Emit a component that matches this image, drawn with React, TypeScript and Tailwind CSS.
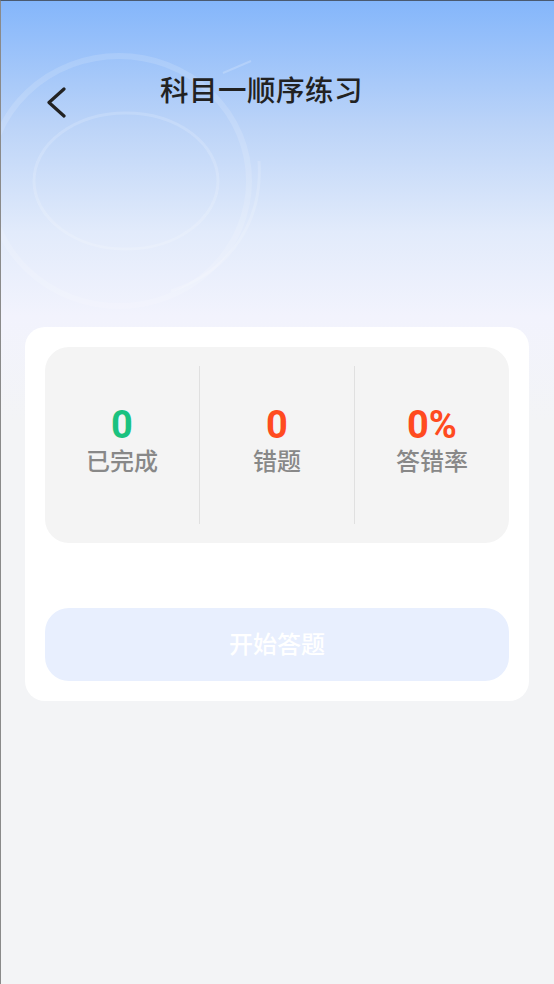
const stats = [
  { value: '0', label: '已完成', color: 'text-[#1bc27f]' },
  { value: '0', label: '错题', color: 'text-[#ff4b1f]' },
  { value: '0%', label: '答错率', color: 'text-[#ff4b1f]' },
];

export default function App() {
  return (
    <div
      className="relative min-h-[984px] w-full overflow-hidden border-l border-t border-l-[#8a8a8a] border-t-[#4a5a70] bg-[#f3f4f6]"
      style={{ fontFamily: 'Roboto, "Noto Sans CJK SC", sans-serif' }}
    >
      {/* header background */}
      <div className="absolute inset-x-0 top-0 h-[420px] bg-[linear-gradient(to_bottom,#84b6fb_0%,#bcd4f8_30%,#e2ebfb_55%,#f2f3fd_75%,#f3f4f6_100%)]" />
      <svg className="absolute left-0 top-0" width="300" height="320" viewBox="0 0 300 320" fill="none">
        <ellipse cx="118" cy="180" rx="130" ry="125" stroke="white" strokeOpacity="0.14" strokeWidth="6" />
        <ellipse cx="125" cy="180" rx="92" ry="68" stroke="white" strokeOpacity="0.16" strokeWidth="3" />
        <path d="M258 160 C 262 220 230 270 170 290" stroke="white" strokeOpacity="0.16" strokeWidth="3" />
        <path d="M222 72 L 250 60" stroke="white" strokeOpacity="0.2" strokeWidth="2" />
      </svg>

      <div className="relative">
        <div className="relative flex h-[182px] items-start justify-center pr-[32px] pt-[72px]">
          <button className="absolute left-[44px] top-[86px] text-[#222]">
            <svg width="24" height="32" viewBox="0 0 24 32" fill="none">
              <path d="M19 2 L4 15.5 L19 29" stroke="currentColor" strokeWidth="3.2" strokeLinecap="round" strokeLinejoin="round" />
            </svg>
          </button>
          <h1 className="text-[28.5px] font-medium leading-[38px] tracking-[0.5px] text-[#222]">科目一顺序练习</h1>
        </div>

        <div className="ml-[24px] mr-[25px] mt-[144px] rounded-[20px] bg-white p-[20px]">
          <div className="flex h-[196px] items-center rounded-[24px] bg-[#f4f4f4] py-[19px]">
            {stats.map((s, i) => (
              <div
                key={s.label}
                className={`flex h-full flex-1 flex-col items-center justify-center pb-[8px] ${i > 0 ? 'border-l border-[#e0e0e0]' : ''}`}
              >
                <div className={`text-[38px] font-bold leading-[42px] ${s.color}`}>{s.value}</div>
                <div className="text-[24px] font-medium leading-[32px] text-[#888]">{s.label}</div>
              </div>
            ))}
          </div>

          <button className="mt-[65px] flex h-[73px] w-full items-center justify-center rounded-[24px] bg-[#e8effe] text-[24px] font-medium text-white">
            开始答题
          </button>
        </div>
      </div>
    </div>
  );
}
